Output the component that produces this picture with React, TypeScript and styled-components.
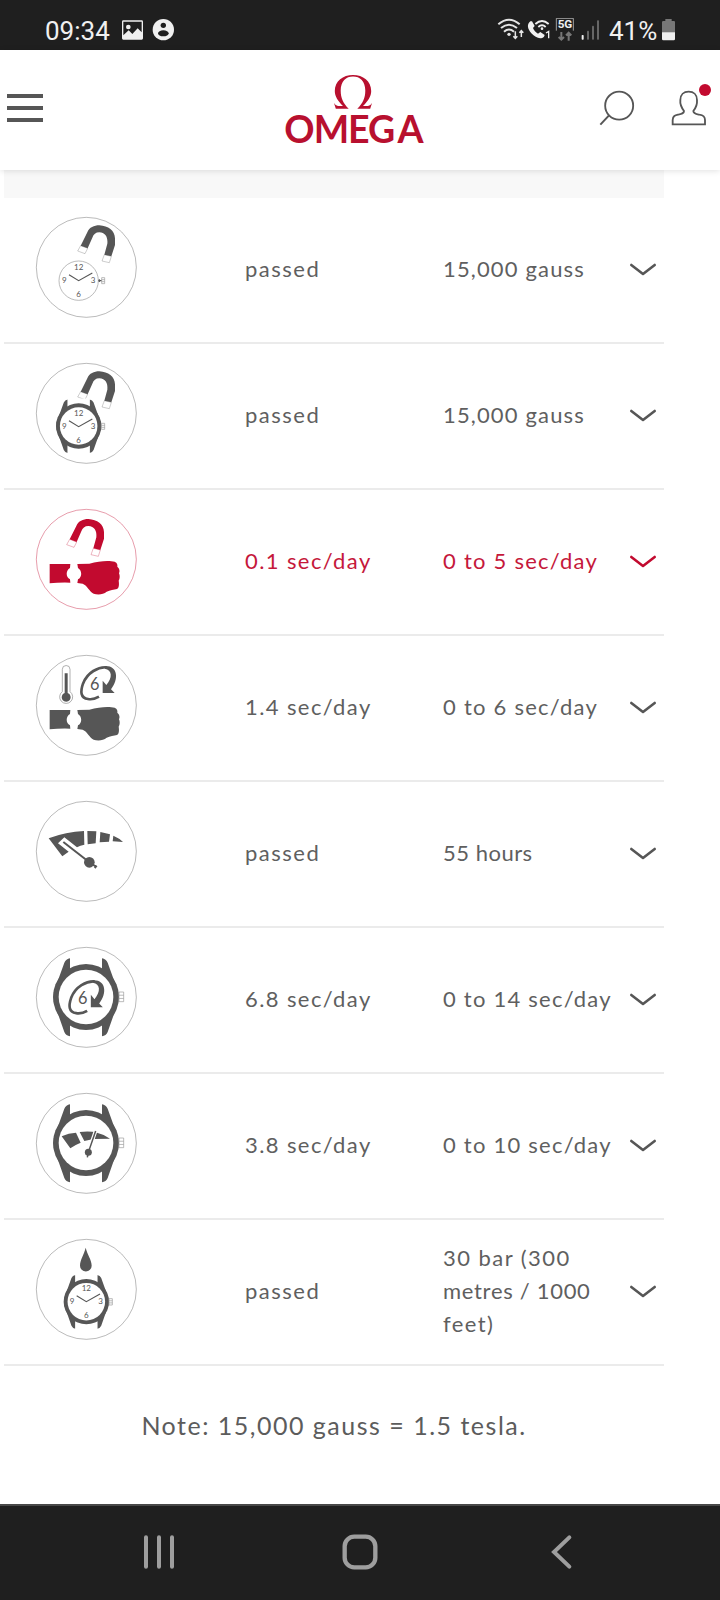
import React from "react";
import styled, { createGlobalStyle } from "styled-components";

const RED = "#c20a2f";
const GREY = "#565656";

const GlobalStyle = createGlobalStyle`
  * { box-sizing: border-box; }
  body { margin: 0; background: #fff; font-family: Lato, sans-serif; }
  svg { display: block; flex: none; }
`;

const Screen = styled.div`
  width: 720px;
  height: 1600px;
  display: flex;
  flex-direction: column;
  overflow: hidden;
`;

const StatusBar = styled.div`
  height: 50px;
  flex: none;
  display: flex;
  align-items: center;
  justify-content: space-between;
  padding: 10px 44px 0 45px;
  background: #1f1f1f;
  color: #f0f0f0;
  font: 26px/30px Roboto, sans-serif;
`;

const StatusGroup = styled.div`
  display: flex;
  align-items: center;
`;

const Clock = styled.span`
  width: 76px;
  padding-top: 2px;
`;

const BatteryLevel = styled.span`
  width: 52px;
  margin-left: 9px;
  padding-top: 2px;
  white-space: nowrap;
`;

const Spaced = styled.span<{ $left: number }>`
  margin-left: ${(p) => p.$left}px;
`;

const Header = styled.header`
  position: relative;
  z-index: 1;
  height: 120px;
  flex: none;
  display: grid;
  grid-template-columns: 1fr auto 1fr;
  align-items: center;
  padding: 0 8px;
  background: #fff;
  box-shadow: 0 1px 6px rgba(0, 0, 0, 0.12);
`;

const MenuButton = styled.div`
  width: 36px;
  display: flex;
  flex-direction: column;
  gap: 8px;
  margin: -4px 0 0 -0.6px;
`;

const MenuBar = styled.span`
  height: 4px;
  background: ${GREY};
`;

const HeaderActions = styled.div`
  display: flex;
  justify-content: flex-end;
  gap: 35px;
`;

const Results = styled.main`
  width: 660px;
  margin-left: 4px;
  flex: 1;
`;

const TableHead = styled.div`
  height: 28px;
  background: #f8f8f8;
`;

const Row = styled.div<{ $active?: boolean }>`
  height: 146px;
  display: grid;
  grid-template-columns: 241px 198px 186px 28px;
  align-items: center;
  border-bottom: 2px solid #ebebeb;
  color: ${(p) => (p.$active ? RED : GREY)};
`;

const IconCell = styled.div`
  padding-left: 16px;
`;

const Cell = styled.div`
  padding-bottom: 4px;
  font-size: 22px;
  line-height: 33px;
  opacity: 0.94;
`;

const Line = styled.div<{ $spacing: number }>`
  letter-spacing: ${(p) => p.$spacing}px;
  white-space: nowrap;
`;

const Note = styled.p`
  margin: 0;
  padding-top: 41px;
  text-align: center;
  color: #5c5c5c;
  font-size: 25px;
  line-height: 36px;
  letter-spacing: 1.5px;
`;

const NavBar = styled.nav`
  height: 96px;
  flex: none;
  display: flex;
  align-items: center;
  justify-content: space-between;
  padding: 0 139px;
  background: #1f1f1f;
  border-top: 2px solid #484848;
`;

const Omega = () => (
  <svg width="160" height="80" viewBox="280 70 160 80" fill="#b8102f">
    <path d="M348.700 108.800H335.800L334 103Q335.500 105.800 338 106H343C338 101 334.800 96.500 334.800 91C334.800 81 343 75 353 75C363 75 371.200 81 371.200 91C371.200 96.500 368 101 363 106H368Q370.500 105.800 372 103L370.200 108.800H357.300C363 103 365.300 98 365.300 90.500C365.300 81 360 76.400 353 76.400C346 76.400 340.700 81 340.700 90.500C340.700 98 343 103 348.700 108.800Z" />
    <text x="284.200 313.800 348 368 397.500" y="143.300" fontSize="37.500" fontWeight="700" fontFamily="Lato, sans-serif">OMEGA</text>
  </svg>
);

const Crown = ({ x, y, w, h }: { x: number; y: number; w: number; h: number }) => (
  <path
    d={`M${x} ${y}h${w}v${h}h${-w}zM${x} ${y + h / 3}h${w}M${x} ${y + (2 * h) / 3}h${w}`}
    fill="none" stroke="#999" strokeWidth="2"
  />
);

const WatchCase = ({ cx, cy, scale = 1 }: { cx: number; cy: number; scale?: number }) => (
  <g transform={`translate(${cx} ${cy}) scale(${scale})`}>
    <path fill="currentColor" d="M-48-116Q-60-114-65-103L-97-14V14L-65 105Q-60 116-48 118V60H48V118Q60 116 65 105L97 14V-14L65-103Q60-114 48-116V-60H-48Z" />
    <path fill="#fff" d="M-48-120H48V-60H-48ZM-48 60H48V122H-48Z" />
    <circle r="99" fill="currentColor" />
    <circle r="82" fill="#fff" />
  </g>
);

const Dial = ({ cx, cy }: { cx: number; cy: number }) => (
  <g transform={`translate(${cx} ${cy})`} fill="currentColor" fontSize="24" fontFamily="Lato, sans-serif" textAnchor="middle">
    <text y="-32">12</text>
    <text x="-43" y="8">9</text>
    <text x="43" y="8">3</text>
    <text y="49">6</text>
    <path d="M-29-18L0 0L41-23" fill="none" stroke="currentColor" strokeWidth="3.500" />
  </g>
);

const Magnet = ({ dx = 0, dy = 0 }: { dx?: number; dy?: number }) => (
  <g transform={`translate(${dx} ${dy})`}>
    <path fill="currentColor" d="M182 137L202 97C208 82 222 76 238 76C265 78 284 91 285 115V135L274 169L253 164L262 131C264 111 256 98 238 97C227 97 221 103 217 113L203 145Z" />
    <path fill="none" stroke="currentColor" strokeOpacity=".5" strokeWidth="1.800" d="M182 137L203 145L195 161L173 153ZM253 164L274 169L268 188L246 183Z" />
  </g>
);

const Wrist = () => (
  <path
    fill="currentColor"
    d="M89 216H151L150 228C137 235 137 256 150 262L151 272Q118 271 89 274ZM172 216L208 215C238 206 268 205 284 209C292 212 293 219 292 224C299 230 300 238 297 244C300 250 300 261 296 266C298 277 297 288 291 291C282 294 270 294 260 299C250 308 233 309 221 305C207 298 203 281 188 275L172 273L174 262C187 256 187 236 174 228Z"
  />
);

const Turn = ({ dx = 0, dy = 0 }: { dx?: number; dy?: number }) => (
  <g transform={`translate(${dx} ${dy})`} fill="currentColor">
    <path d="M237 176C225 183 215 185 204 183C181 180 181 160 189 137C202 103 235 86 260 88" fill="none" stroke="currentColor" strokeWidth="8" />
    <path d="M258 84C292 84 298 122 273 154L284 165H248V128L259 141C278 118 277 96 254 92Z" />
    <text x="224" y="157" fontSize="49" fontFamily="Lato, sans-serif" textAnchor="middle">6</text>
  </g>
);

const Thermometer = () => (
  <g fill="currentColor">
    <path fill="none" stroke="#888" strokeWidth="2" d="M127 161V94A11.500 11.500 0 0 1 150 94V161A19.500 19.500 0 1 1 127 161Z" />
    <path d="M134 106H143V165A13.500 13.500 0 1 1 134 165Z" />
  </g>
);

const Gauge = () => (
  <g fill="currentColor">
    <path d="M86 163Q138 143 192 141L193 182Q181 184 171 190L133 160L114 178L146 203L127 217ZM202 141L229 142L227 178L203 181ZM241 144L270 151L267 173L239 175ZM280 155Q297 162 309 174L278 172Z" />
    <path d="M130 174L208 235" stroke="currentColor" strokeWidth="6" />
    <path d="M208 235L230 249M230 245L224 252" stroke="currentColor" strokeWidth="6" />
    <circle cx="208" cy="235" r="16" />
  </g>
);

const SmallGauge = () => (
  <g fill="currentColor">
    <path d="M125 181Q146 171 168 170L182 200Q164 207 151 217ZM179 168Q205 164 231 169L224 187Q212 192 193 195ZM231 170Q253 175 270 188L222 189Z" />
    <path d="M227 164L212 208" stroke="#fff" strokeWidth="11" />
    <path d="M227 165L205 229L202 244" fill="none" stroke="currentColor" strokeWidth="4.500" />
    <circle cx="205" cy="229" r="10.500" />
  </g>
);

const drawings: Record<string, React.ReactNode> = {
  movement: (
    <>
      <Magnet />
      <circle cx="176" cy="242" r="59" fill="none" stroke="#999" strokeWidth="2" />
      <Dial cx={176} cy={242} />
      <path d="M235 242H245M238 238V246" stroke="currentColor" strokeWidth="3.500" />
      <Crown x={245} y={233} w={9} h={18} />
    </>
  ),
  watchMagnet: (
    <>
      <Magnet />
      <WatchCase cx={176} cy={240} scale={0.687} />
      <Dial cx={176} cy={242} />
      <Crown x={244} y={232} w={10} h={18} />
    </>
  ),
  wristMagnet: (<><Magnet dx={-33} dy={5} /><Wrist /></>),
  wristTemperature: (<><Thermometer /><Turn /><Wrist /></>),
  reserve: <Gauge />,
  positions: (
    <><WatchCase cx={198} cy={201} /><Turn dx={-35.5} dy={66.5} /><Crown x={297} y={186} w={14} h={29} /></>
  ),
  reserveDeviation: (
    <><WatchCase cx={198} cy={201} /><SmallGauge /><Crown x={297} y={186} w={14} h={29} /></>
  ),
  water: (
    <>
      <path fill="currentColor" d="M197 77C202 98 215 113 215 131A17.500 17.500 0 0 1 180 131C180 113 192 98 197 77Z" />
      <WatchCase cx={199} cy={239} scale={0.687} />
      <Dial cx={199} cy={239} />
      <Crown x={267} y={230} w={10} h={19} />
    </>
  ),
};

const TestIcon = ({ name }: { name: string }) => (
  <svg width="140" height="140" viewBox="0 0 420 420">
    <circle cx="199" cy="202" r="150" fill="none" stroke="currentColor" strokeOpacity=".55" strokeWidth="2.200" />
    {drawings[name]}
  </svg>
);

const Chevron = () => (
  <svg width="28" height="16" viewBox="0 0 28 16" fill="none" stroke="currentColor" strokeWidth="2.600" strokeLinecap="round" strokeLinejoin="round">
    <path d="M2.300 3L14 12L25.700 3" />
  </svg>
);

type TextLine = [text: string, spacing: number];

interface TestRow {
  icon: string;
  result: TextLine;
  criteria: TextLine[];
  active?: boolean;
}

const rows: TestRow[] = [
  { icon: "movement", result: ["passed", 1.5], criteria: [["15,000 gauss", 1.15]] },
  { icon: "watchMagnet", result: ["passed", 1.5], criteria: [["15,000 gauss", 1.15]] },
  { icon: "wristMagnet", result: ["0.1 sec/day", 1.4], criteria: [["0 to 5 sec/day", 1.25]], active: true },
  { icon: "wristTemperature", result: ["1.4 sec/day", 1.4], criteria: [["0 to 6 sec/day", 1.25]] },
  { icon: "reserve", result: ["passed", 1.5], criteria: [["55 hours", 0.5]] },
  { icon: "positions", result: ["6.8 sec/day", 1.4], criteria: [["0 to 14 sec/day", 1.23]] },
  { icon: "reserveDeviation", result: ["3.8 sec/day", 1.4], criteria: [["0 to 10 sec/day", 1.23]] },
  {
    icon: "water",
    result: ["passed", 1.5],
    criteria: [["30 bar (300", 1.45], ["metres / 1000", 0.7], ["feet)", 1.4]],
  },
];

export default function App() {
  return (
    <Screen>
      <GlobalStyle />
      <StatusBar>
        <StatusGroup>
          <Clock>09:34</Clock>
          <svg width="23" height="24" viewBox="363 56 69 72">
            <path fill="#f0f0f0" fillRule="evenodd" d="M370 63H425Q429 63 429 67V117Q429 121 425 121H370Q366 121 366 117V67Q366 63 370 63ZM370 67V108L386 93L397 104L413 87L425 99V67Z" />
            <circle cx="385" cy="83" r="7" fill="#f0f0f0" />
          </svg>
          <Spaced $left={8}>
            <svg width="23" height="24" viewBox="456 56 69 72">
              <circle cx="490" cy="91" r="32" fill="#f0f0f0" />
              <circle cx="490" cy="78" r="8" fill="#1f1f1f" />
              <ellipse cx="490" cy="102" rx="16" ry="9" fill="#1f1f1f" />
            </svg>
          </Spaced>
        </StatusGroup>
        <StatusGroup>
          <svg width="28" height="24" viewBox="414 56 84 72" fill="none" stroke="#e4e4e4" strokeWidth="6">
            <path d="M418 75Q450 47 482 75M426 86Q450 66 474 86M435 97Q450 84 465 97" />
            <circle cx="450" cy="105" r="5" fill="#e4e4e4" stroke="none" />
            <path strokeWidth="4.500" d="M469 96V117M463 111L469 117L475 111M487 113V94M481 100L487 94L493 100" />
          </svg>
          <Spaced $left={1}>
            <svg width="26" height="24" viewBox="501 56 78 72">
              <path fill="#f0f0f0" d="M514 66C503 75 505 88 517 102C530 116 545 121 555 112L557 107L544 98L537 103C530 99 525 93 522 86L527 80L519 66Z" />
              <path fill="none" stroke="#f0f0f0" strokeWidth="5.500" d="M529 74Q549 56 569 74M538 83Q549 73 560 83" />
              <circle cx="549" cy="88" r="4" fill="#f0f0f0" />
              <path fill="none" stroke="#f0f0f0" strokeWidth="4" d="M561 101L569 96V117" />
            </svg>
          </Spaced>
          <Spaced $left={3}>
            <svg width="20" height="24" viewBox="588 56 60 72">
              <path fill="none" stroke="#bbb" strokeWidth="2.500" d="M592 94V57H643V94" />
              <text x="618" y="87" textAnchor="middle" fill="#f0f0f0" fontSize="35" fontWeight="700" fontFamily="Roboto, sans-serif">5G</text>
              <path fill="none" stroke="#777" strokeWidth="6" d="M607 98V121M599 113L607 121L615 113M629 124V100M621 108L629 100L637 108" />
            </svg>
          </Spaced>
          <Spaced $left={6}>
            <svg width="19" height="24" viewBox="666 56 57 72" fill="#666">
              <rect x="668" y="107" width="6" height="14" rx="2" fill="#f0f0f0" />
              <rect x="684" y="94" width="6" height="27" rx="2" />
              <rect x="699" y="79" width="6" height="42" rx="2" />
              <rect x="714" y="63" width="6" height="58" rx="2" />
            </svg>
          </Spaced>
          <BatteryLevel>41%</BatteryLevel>
          <svg width="15" height="24" viewBox="903 56 45 72">
            <path fill="#777" d="M916 59H935V65H942Q945 65 945 69V100H906V69Q906 65 910 65H916Z" />
            <path fill="#f0f0f0" d="M906 99H945V119Q945 123 941 123H910Q906 123 906 119Z" />
          </svg>
        </StatusGroup>
      </StatusBar>
      <Header>
        <MenuButton><MenuBar /><MenuBar /><MenuBar /></MenuButton>
        <Omega />
        <HeaderActions>
          <svg width="36" height="56" viewBox="717 246 108 168" fill="none" stroke={GREY} strokeWidth="5.500">
            <circle cx="777.500" cy="317" r="42" />
            <path d="M747 346L721 374" strokeWidth="6" />
          </svg>
          <svg width="42" height="56" viewBox="930 246 126 168">
            <path fill="none" stroke={GREY} strokeWidth="5.500" d="M938 373V360C939 348 945 346 954 344C965 342 972 341 972 333C963 321 960 309 961 300C961 284 971 275 986 275C1001 275 1011 284 1011 300C1012 311 1008 323 1000 333C1000 341 1008 342 1018 344C1030 346 1035 349 1035 360V373Z" />
            <circle cx="1035" cy="270" r="18" fill={RED} />
          </svg>
        </HeaderActions>
      </Header>
      <Results>
        <TableHead />
        {rows.map((row) => (
          <Row key={row.icon} $active={row.active}>
            <IconCell><TestIcon name={row.icon} /></IconCell>
            <Cell>
              <Line $spacing={row.result[1]}>{row.result[0]}</Line>
            </Cell>
            <Cell>
              {row.criteria.map(([text, spacing]) => (
                <Line key={text} $spacing={spacing}>{text}</Line>
              ))}
            </Cell>
            <Chevron />
          </Row>
        ))}
        <Note>Note: 15,000 gauss = 1.5 tesla.</Note>
      </Results>
      <NavBar>
        <svg width="40" height="40" viewBox="117 129 120 120" stroke="#9e9e9e" strokeWidth="12" strokeLinecap="round">
          <path d="M138 142V230M177 142V230M216 142V230" />
        </svg>
        <svg width="40" height="40" viewBox="720 129 120 120" fill="none" stroke="#9e9e9e" strokeWidth="13">
          <rect x="734" y="140" width="92" height="92" rx="29" />
        </svg>
        <svg width="40" height="40" viewBox="1323 129 120 120" fill="none" stroke="#9e9e9e" strokeWidth="12" strokeLinecap="round">
          <path d="M1408 142L1362 186L1408 230" />
        </svg>
      </NavBar>
    </Screen>
  );
}
